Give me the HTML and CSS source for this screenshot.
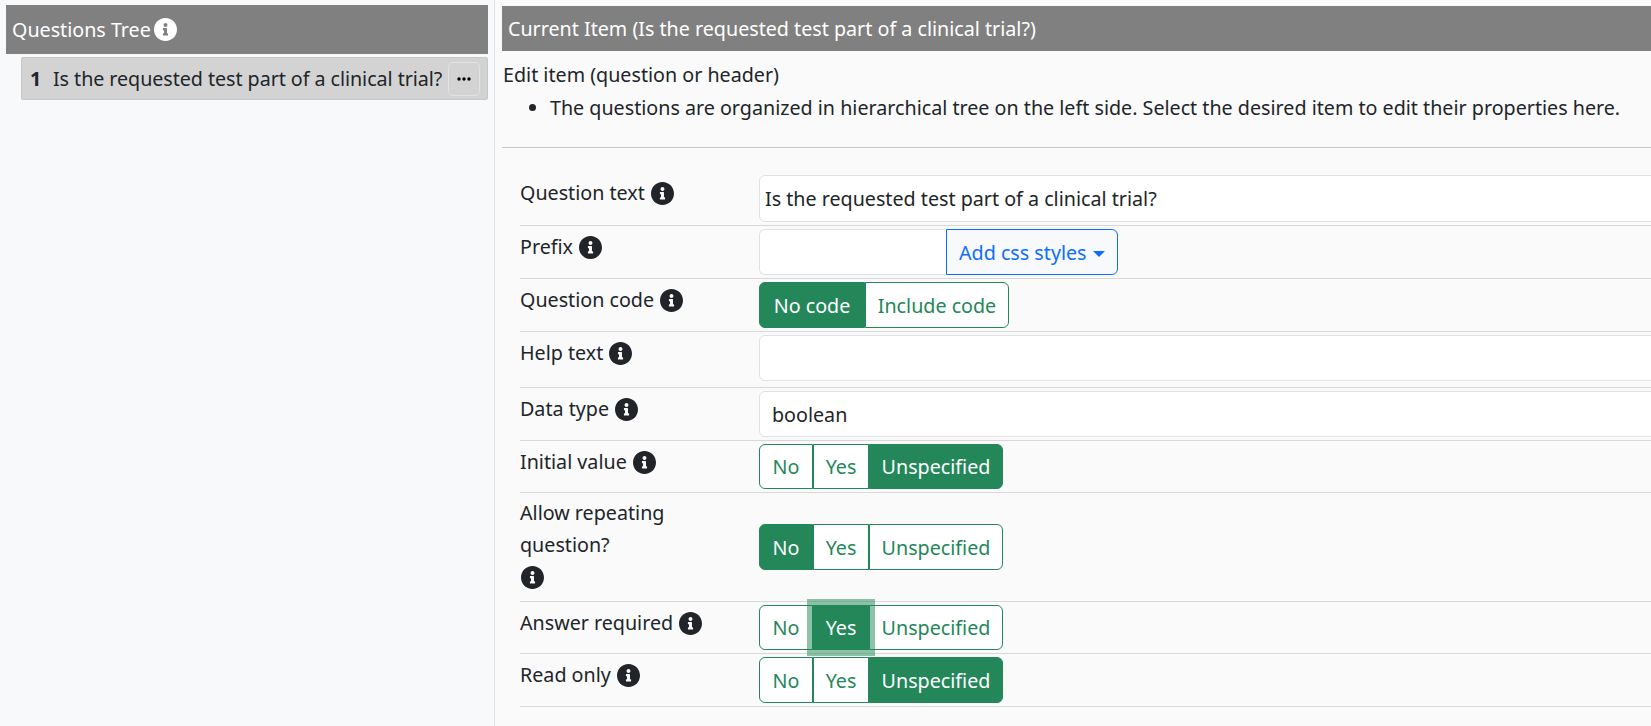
FILE: index.html
```html
<!DOCTYPE html>
<html lang="en">
<head>
  <meta charset="UTF-8">
  <title>Questions Tree</title>
  <link rel="stylesheet" href="styles.css">
</head>
<body>
  <svg class="sprites" width="0" height="0">
    <symbol id="info" viewBox="8 8 496 496">
      <path d="M256 8C119.043 8 8 119.083 8 256c0 136.997 111.043 248 248 248s248-111.003 248-248C504 119.083 392.957 8 256 8zm0 110c23.196 0 42 18.804 42 42s-18.804 42-42 42-42-18.804-42-42 18.804-42 42-42zm56 254c0 6.627-5.373 12-12 12h-88c-6.627 0-12-5.373-12-12v-24c0-6.627 5.373-12 12-12h12v-64h-12c-6.627 0-12-5.373-12-12v-24c0-6.627 5.373-12 12-12h64c6.627 0 12 5.373 12 12v100h12c6.627 0 12 5.373 12 12v24z"/>
    </symbol>
  </svg>

  <div class="layout">
    <aside class="tree">
      <div class="tree-title">Questions Tree <svg class="info info-light"><use href="#info"/></svg></div>
      <div class="tree-item">
        <b class="tree-num">1</b>
        <span class="tree-text">Is the requested test part of a clinical trial?</span>
        <span class="tree-menu">
          <svg width="14" height="4" viewBox="0 0 14 4"><circle cx="2" cy="2" r="1.7"/><circle cx="7" cy="2" r="1.7"/><circle cx="12" cy="2" r="1.7"/></svg>
        </span>
      </div>
    </aside>

    <main class="editor">
      <div class="editor-title">Current Item (Is the requested test part of a clinical trial?)</div>
      <p class="editor-lead">Edit item (question or header)</p>
      <ul class="editor-notes">
        <li>The questions are organized in hierarchical tree on the left side. Select the desired item to edit their properties here.</li>
      </ul>
      <hr class="editor-rule">

      <form class="fields">
        <div class="field">
          <label class="field-label">Question text <svg class="info"><use href="#info"/></svg></label>
          <div class="field-box h47 text-tight">Is the requested test part of a clinical trial?</div>
        </div>
        <div class="field">
          <label class="field-label">Prefix <svg class="info"><use href="#info"/></svg></label>
          <div class="prefix-group">
            <div class="field-box prefix-input"></div>
            <button type="button" class="css-btn">Add css styles</button>
          </div>
        </div>
        <div class="field">
          <label class="field-label">Question code <svg class="info"><use href="#info"/></svg></label>
          <div class="toggle">
            <span class="toggle-btn w106 on">No code</span>
            <span class="toggle-btn w144">Include code</span>
          </div>
        </div>
        <div class="field field-loose">
          <label class="field-label">Help text <svg class="info"><use href="#info"/></svg></label>
          <div class="field-box"></div>
        </div>
        <div class="field">
          <label class="field-label">Data type <svg class="info"><use href="#info"/></svg></label>
          <div class="field-box">boolean</div>
        </div>
        <div class="field">
          <label class="field-label">Initial value <svg class="info"><use href="#info"/></svg></label>
          <div class="toggle h45">
            <span class="toggle-btn w54">No</span>
            <span class="toggle-btn w56">Yes</span>
            <span class="toggle-btn w134 on">Unspecified</span>
          </div>
        </div>
        <div class="field field-tall">
          <label class="field-label">Allow repeating<br>question?<br><svg class="info"><use href="#info"/></svg></label>
          <div class="toggle">
            <span class="toggle-btn w54 on">No</span>
            <span class="toggle-btn w56">Yes</span>
            <span class="toggle-btn w134">Unspecified</span>
          </div>
        </div>
        <div class="field">
          <label class="field-label">Answer required <svg class="info"><use href="#info"/></svg></label>
          <div class="toggle h45">
            <span class="toggle-btn w54">No</span>
            <span class="toggle-btn w56 on focus">Yes</span>
            <span class="toggle-btn w134">Unspecified</span>
          </div>
        </div>
        <div class="field">
          <label class="field-label">Read only <svg class="info"><use href="#info"/></svg></label>
          <div class="toggle">
            <span class="toggle-btn w54">No</span>
            <span class="toggle-btn w56">Yes</span>
            <span class="toggle-btn w134 on">Unspecified</span>
          </div>
        </div>
      </form>
    </main>
  </div>
</body>
</html>
```

FILE: styles.css
```css
* {
  box-sizing: border-box;
}
html, body {
  margin: 0;
  height: 100%;
  overflow: hidden;
}
body {
  font-family: "Noto Sans", "Open Sans", sans-serif;
  font-size: 19.7px;
  color: #212529;
  background: #fafafa;
}
.sprites {
  display: block;
}
.layout {
  display: flex;
  height: 726px;
}

/* left tree */
.tree {
  flex: 0 0 495px;
  padding: 5px 6px 0;
  background: #f8f9fa;
  border-right: 1px solid #dee2e6;
}
.tree-title {
  display: flex;
  align-items: center;
  gap: 3px;
  height: 49px;
  padding-left: 6px;
  background: #808080;
  color: #fff;
}
.tree-item {
  display: flex;
  align-items: center;
  height: 43px;
  margin: 3px 0 0 15px;
  padding: 0 7px 0 8px;
  background: #d3d3d3;
  border: 1px solid #c8c8c8;
  border-radius: 2px;
}
.tree-num {
  width: 23px;
}
.tree-text {
  flex: 1;
  white-space: nowrap;
  letter-spacing: -0.05px;
}
.tree-menu {
  display: flex;
  align-items: center;
  justify-content: center;
  flex: 0 0 32px;
  height: 34px;
  border: 1px solid #dfe2e8;
  border-radius: 5px;
}

/* right editor */
.editor {
  flex: 0 0 1200px;
  padding: 6px 0 0 7px;
}
.editor-title {
  display: flex;
  align-items: center;
  height: 45px;
  padding-left: 6px;
  background: #808080;
  color: #fff;
}
.editor-lead {
  margin: 8px 0 0 1px;
  line-height: 32px;
}
.editor-notes {
  margin: 0;
  padding-left: 48px;
  line-height: 34px;
  white-space: nowrap;
}
.editor-rule {
  margin: 22px 0 24px;
  border: 0;
  border-top: 1px solid #c8c8c8;
}
.fields {
  margin-left: 18px;
}
.field {
  display: flex;
  align-items: center;
  padding: 3px 0;
  border-bottom: 1px solid #d8d8d8;
}
.field-loose {
  padding-bottom: 6px;
}
.field-tall {
  padding: 0;
}
.field-label {
  flex: 0 0 239px;
  align-self: flex-start;
  padding-top: 2px;
  line-height: 32px;
}
.field-tall .field-label {
  padding: 4px 0 8px;
}
.info {
  width: 23px;
  height: 23px;
  margin-left: 1px;
  vertical-align: -5px;
  fill: #212529;
}
.info-light {
  fill: #fff;
  margin-left: 0;
}
.field-box {
  flex: 1;
  height: 46px;
  padding: 0 12px;
  line-height: 46px;
  background: #fff;
  border: 1px solid #dee2e6;
  border-radius: 6px 0 0 6px;
}
.h47 {
  height: 47px;
}
.text-tight {
  padding-left: 5px;
}
.prefix-group {
  display: flex;
  flex: 1;
}
.prefix-input {
  flex: 0 0 187px;
  border-right: 0;
  background: #fff;
}
.css-btn {
  height: 46px;
  width: 172px;
  padding: 0 0 0 12px;
  text-align: left;
  font: inherit;
  color: #0d6efd;
  background: #f8f9fa;
  border: 1px solid #0d6efd;
  border-radius: 0 6px 6px 0;
  white-space: nowrap;
}
.css-btn::after {
  content: "";
  display: inline-block;
  margin-left: 6px;
  vertical-align: 3px;
  border-top: 6px solid;
  border-left: 6px solid transparent;
  border-right: 6px solid transparent;
}

/* button groups */
.toggle {
  display: flex;
  height: 46px;
}
.toggle.h45 {
  height: 45px;
}
.toggle-btn {
  display: flex;
  align-items: center;
  justify-content: center;
  color: #23875a;
  background: #fff;
  border: 1px solid #23875a;
  white-space: nowrap;
}
.toggle-btn:first-child {
  border-radius: 6px 0 0 6px;
}
.toggle-btn:last-child {
  border-radius: 0 6px 6px 0;
}
.toggle-btn.on {
  color: #fff;
  background: #23875a;
}
.toggle-btn.focus {
  position: relative;
  box-shadow: 0 0 0 6px rgba(25, 135, 84, 0.5);
}
.w54 { width: 54px; }
.w56 { width: 56px; }
.w106 { width: 106px; }
.w134 { width: 134px; }
.w144 { width: 144px; }
```
